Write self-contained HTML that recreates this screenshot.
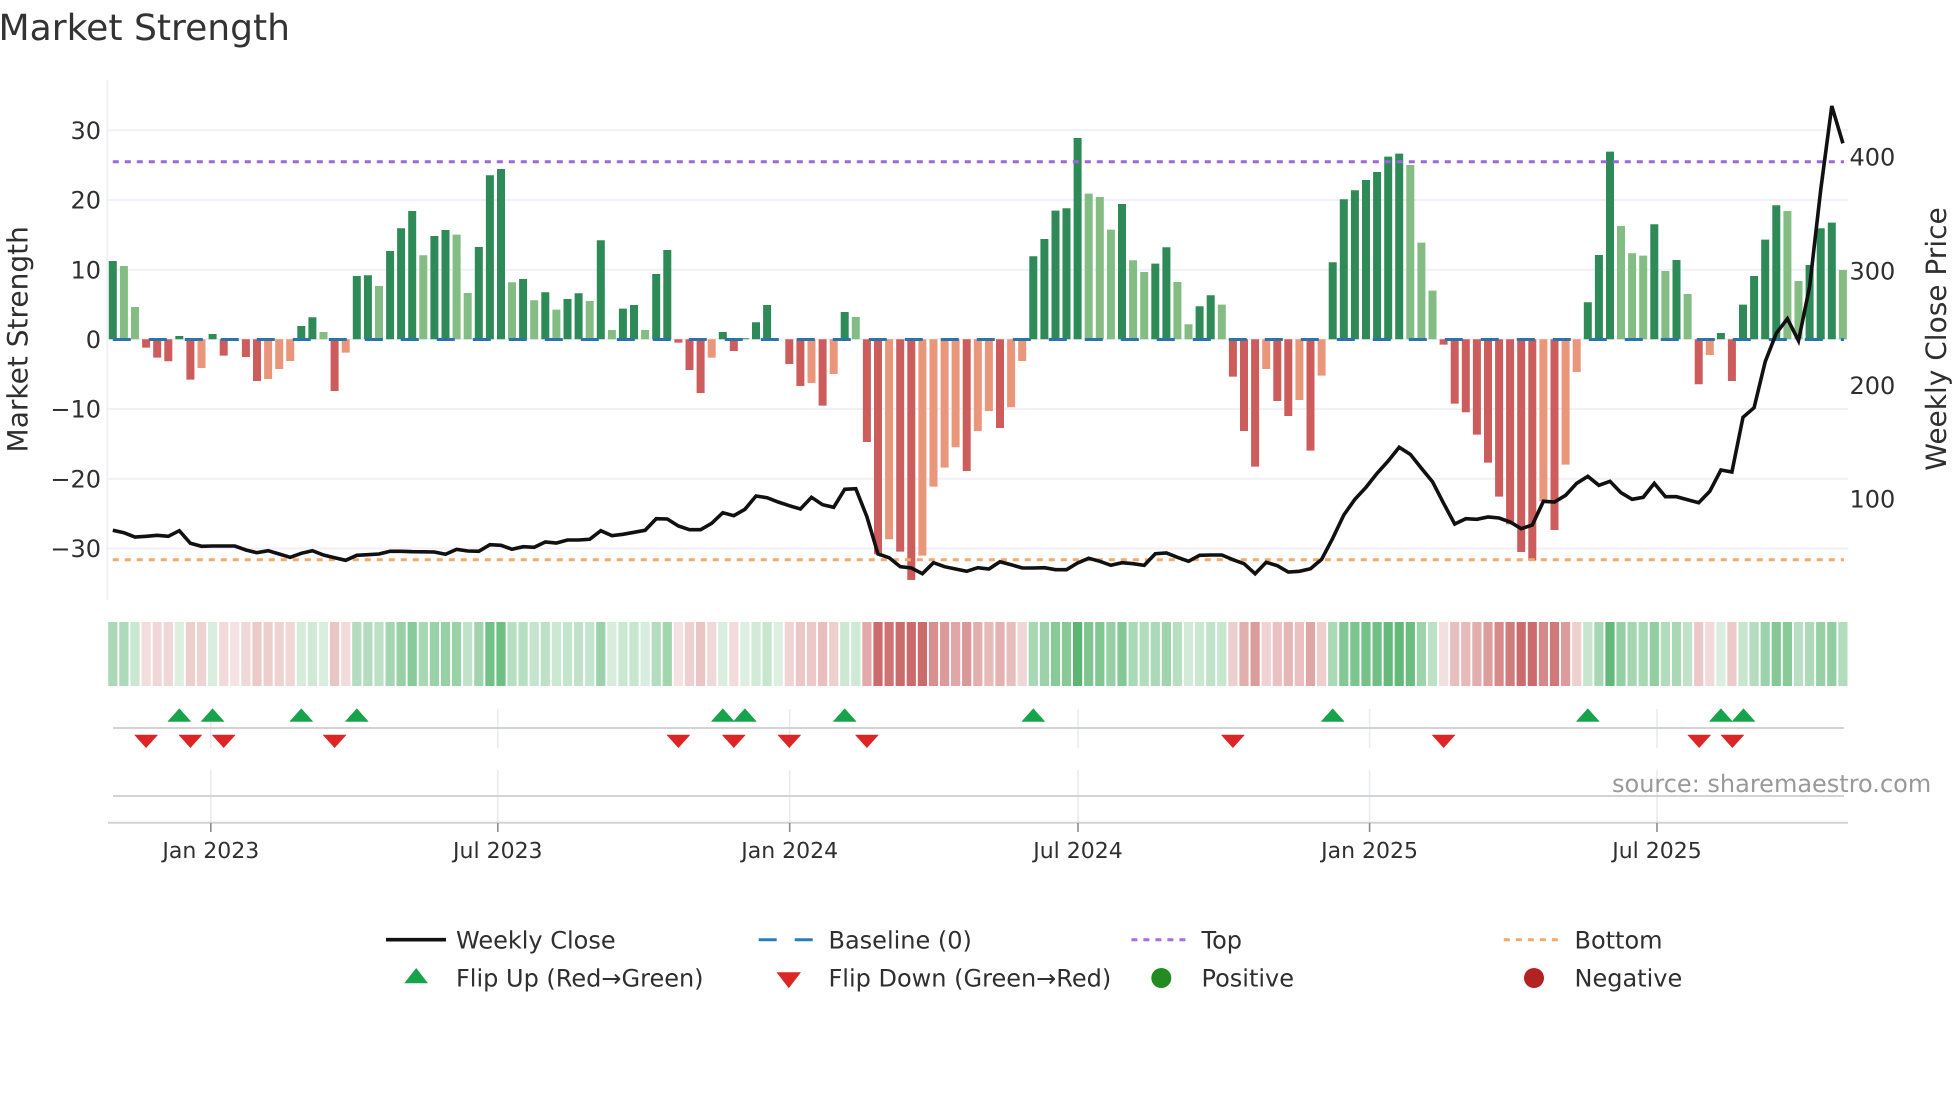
<!DOCTYPE html>
<html lang="en"><head><meta charset="utf-8"><title>Market Strength</title>
<style>
html,body{margin:0;padding:0;background:#fff;width:1960px;height:1102px;overflow:hidden}
svg{display:block}
text{font-family:"DejaVu Sans","Liberation Sans",sans-serif;fill:#2f2f2f;text-rendering:geometricPrecision}
.yt{font-size:24px;text-anchor:end}
.rt{font-size:24px}
.xt{font-size:22px;text-anchor:middle}
.lg{font-size:24px}
</style></head><body>
<svg width="1960" height="1102" viewBox="0 0 1960 1102" xmlns="http://www.w3.org/2000/svg">
<defs>
<path id="u" d="M-11.3 721.4H11.3L0 708.8Z" fill="#16a34a" stroke="#16a34a" stroke-width=".6" stroke-linejoin="round"/>
<path id="d" d="M-11.3 735H11.3L0 747.6Z" fill="#dc2626" stroke="#dc2626" stroke-width=".6" stroke-linejoin="round"/>
</defs>
<rect width="1960" height="1102" fill="#fff"/>
<text x="-1.5" y="40" font-size="36.1" style="fill:#333">Market Strength</text>
<path d="M107.3 80V600M108 130.3H1848M108 200H1848M108 269.7H1848M108 339.3H1848M108 409H1848M108 478.7H1848M108 548.5H1848" stroke="#f0f1f6" stroke-width="2" fill="none"/>
<g fill="none" stroke-width="8">
<path stroke="#2e8b57" d="M112.8 339.3v-78.3M179.3 339.3v-3.3M212.6 339.3v-5.3M301.3 339.3v-13.3M312.4 339.3v-22M356.8 339.3v-63.3M367.9 339.3v-64M390.1 339.3v-88.3M401.1 339.3v-111M412.2 339.3v-128.3M434.4 339.3v-103.3M445.5 339.3v-109.3M478.8 339.3v-92.3M489.9 339.3v-164M501 339.3v-170.3M523.1 339.3v-60.3M545.3 339.3v-47M567.5 339.3v-40.3M578.6 339.3v-46M600.8 339.3v-99M622.9 339.3v-30.7M634 339.3v-34.3M656.2 339.3v-65.3M667.3 339.3v-89.3M722.8 339.3v-7.3M744.9 339.3v-1M756 339.3v-17M767.1 339.3v-34.3M844.7 339.3v-27.3M1033.3 339.3v-83M1044.4 339.3v-100.3M1055.5 339.3v-128.7M1066.5 339.3v-131M1077.6 339.3v-201.3M1122 339.3v-135.3M1155.3 339.3v-75.7M1166.4 339.3v-92M1199.6 339.3v-33M1210.7 339.3v-44M1332.7 339.3v-77M1343.8 339.3v-140M1354.9 339.3v-149M1366 339.3v-159.3M1377.1 339.3v-167.3M1388.2 339.3v-182.7M1399.2 339.3v-185.7M1587.8 339.3v-37M1598.9 339.3v-84.3M1610 339.3v-187.7M1654.3 339.3v-115M1676.5 339.3v-79.3M1720.9 339.3v-6.3M1743 339.3v-34.7M1754.1 339.3v-63.3M1765.2 339.3v-99.7M1776.3 339.3v-134M1809.6 339.3v-74.3M1820.7 339.3v-111M1831.8 339.3v-116.7"/>
<path stroke="#83bd83" d="M123.9 339.3v-73.3M135 339.3v-32.3M323.5 339.3v-7.3M379 339.3v-53.3M423.3 339.3v-84M456.6 339.3v-104.7M467.7 339.3v-46.3M512 339.3v-57M534.2 339.3v-39M556.4 339.3v-29.7M589.7 339.3v-38.3M611.9 339.3v-9.3M645.1 339.3v-9.3M855.8 339.3v-22.3M1088.7 339.3v-145.7M1099.8 339.3v-142.3M1110.9 339.3v-109.7M1133.1 339.3v-79M1144.2 339.3v-67.3M1177.4 339.3v-57.3M1188.5 339.3v-15M1221.8 339.3v-34.7M1410.3 339.3v-174.3M1421.4 339.3v-96.7M1432.5 339.3v-48.7M1621 339.3v-113.3M1632.1 339.3v-86M1643.2 339.3v-83.7M1665.4 339.3v-68.3M1687.6 339.3v-45.3M1787.4 339.3v-128.3M1798.5 339.3v-58.3M1842.9 339.3v-69.3"/>
<path stroke="#cd5c5c" d="M146.1 339.3v8.3M157.2 339.3v18.3M168.3 339.3v22M190.4 339.3v40.3M223.7 339.3v16.3M245.9 339.3v17.7M257 339.3v41.7M334.6 339.3v51.7M678.4 339.3v3.3M689.5 339.3v30.7M700.6 339.3v53.7M733.8 339.3v11.7M789.3 339.3v24.7M800.4 339.3v46.7M822.6 339.3v66.3M866.9 339.3v102.7M878 339.3v215M900.2 339.3v212.3M911.3 339.3v240.7M966.7 339.3v131.7M1000 339.3v88.7M1232.9 339.3v37.3M1244 339.3v91.7M1255.1 339.3v127.3M1277.3 339.3v61.7M1288.3 339.3v76.7M1310.5 339.3v111.3M1443.6 339.3v5.3M1454.7 339.3v64.3M1465.8 339.3v73M1476.9 339.3v95.3M1488 339.3v123.3M1499.1 339.3v157.3M1510.1 339.3v185M1521.2 339.3v212.7M1532.3 339.3v221.3M1554.5 339.3v190.7M1698.7 339.3v45M1731.9 339.3v41.7"/>
<path stroke="#e9967a" d="M201.5 339.3v28.7M268.1 339.3v39.7M279.2 339.3v29.7M290.2 339.3v21.7M345.7 339.3v13.3M711.7 339.3v18.3M811.5 339.3v43.7M833.7 339.3v34.7M889.1 339.3v200M922.4 339.3v216.3M933.5 339.3v147.3M944.6 339.3v128.3M955.6 339.3v108M977.8 339.3v91.7M988.9 339.3v71.7M1011.1 339.3v68M1022.2 339.3v21.7M1266.2 339.3v29.7M1299.4 339.3v60.7M1321.6 339.3v36.3M1543.4 339.3v162M1565.6 339.3v125.3M1576.7 339.3v32.7M1709.8 339.3v15.7"/>
</g>
<path d="M112.8 339.5H1844" stroke="#2b74a8" stroke-width="3" stroke-dasharray="18 18" fill="none"/>
<path d="M112.8 161.7H1844" stroke="#9c68d8" stroke-width="3" stroke-dasharray="6 6" fill="none"/>
<path d="M112.8 559.7H1844" stroke="#f2a96c" stroke-width="3" stroke-dasharray="6 6" fill="none"/>
<polyline fill="none" stroke="#111" stroke-width="3.6" stroke-linejoin="miter" points="112.8,530.3 123.9,532.7 135,537 146.1,536.3 157.2,535.3 168.3,536.3 179.3,530.7 190.4,543.3 201.5,546.3 212.6,546 223.7,546 234.8,546 245.9,550 257,552.7 268.1,550.7 279.2,554 290.2,557.3 301.3,553.3 312.4,550.7 323.5,555 334.6,557.7 345.7,560.3 356.8,555.3 367.9,554.7 379,554 390.1,551.3 401.1,551.3 412.2,551.7 423.3,551.8 434.4,552 445.5,554.3 456.6,549.3 467.7,551 478.8,551.3 489.9,544.7 501,545.3 512,549.3 523.1,546.7 534.2,547.3 545.3,542 556.4,543 567.5,540 578.6,540 589.7,539.3 600.8,530.7 611.9,535.7 622.9,534.3 634,532.3 645.1,530.3 656.2,518.7 667.3,519 678.4,526 689.5,529.7 700.6,529.7 711.7,523.3 722.8,512.7 733.8,515.7 744.9,509.3 756,496 767.1,497.7 778.2,502 789.3,505.7 800.4,509 811.5,497.3 822.6,504.7 833.7,507.3 844.7,489.3 855.8,488.7 866.9,516.7 878,554 889.1,557.7 900.2,566.7 911.3,568 922.4,573.7 933.5,562.7 944.6,566.7 955.6,569 966.7,571.3 977.8,567.7 988.9,569 1000,561.7 1011.1,564.7 1022.2,568 1033.3,568 1044.4,567.7 1055.5,569.7 1066.5,569.7 1077.6,563 1088.7,558.3 1099.8,561.3 1110.9,565.3 1122,562.7 1133.1,563.7 1144.2,565.3 1155.3,553.7 1166.4,553 1177.4,557.3 1188.5,561.3 1199.6,555.3 1210.7,555 1221.8,555 1232.9,559.7 1244,563.7 1255.1,573.7 1266.2,562.3 1277.3,565.7 1288.3,572 1299.4,571.3 1310.5,568.7 1321.6,559.3 1332.7,538.3 1343.8,515 1354.9,499.3 1366,487.3 1377.1,473.3 1388.2,461 1399.2,447.3 1410.3,454.3 1421.4,468.3 1432.5,481.7 1443.6,503.3 1454.7,524 1465.8,518.7 1476.9,519.3 1488,517 1499.1,518 1510.1,522 1521.2,528.7 1532.3,525 1543.4,501.3 1554.5,502 1565.6,495.3 1576.7,483.3 1587.8,476.3 1598.9,485.3 1610,481.3 1621,492.7 1632.1,499.3 1643.2,497.3 1654.3,483.3 1665.4,496.7 1676.5,496.7 1687.6,499.7 1698.7,502.7 1709.8,491.3 1720.9,470 1731.9,472 1743,417.3 1754.1,407.7 1765.2,361.7 1776.3,333.3 1787.4,318.7 1798.5,340.7 1809.6,286.7 1820.7,190 1831.8,106 1842.9,143.3"/>
<text class="yt" x="101" y="139">30</text>
<text class="yt" x="101" y="208.7">20</text>
<text class="yt" x="101" y="278.4">10</text>
<text class="yt" x="101" y="348">0</text>
<text class="yt" x="101" y="417.7">−10</text>
<text class="yt" x="101" y="487.4">−20</text>
<text class="yt" x="101" y="557.2">−30</text>
<text class="rt" x="1849.5" y="165.6">400</text>
<text class="rt" x="1849.5" y="279.6">300</text>
<text class="rt" x="1849.5" y="393.9">200</text>
<text class="rt" x="1849.5" y="507.6">100</text>
<text transform="translate(27.4 339.3) rotate(-90)" text-anchor="middle" font-size="28">Market Strength</text>
<text transform="translate(1946 339) rotate(-90)" text-anchor="middle" font-size="28">Weekly Close Price</text>
<g fill="none" stroke="rgb(33,156,64)" stroke-width="9.2" opacity=".95">
<path opacity=".40" d="M112.8 622v64"/><path opacity=".39" d="M123.9 622v64"/><path opacity=".26" d="M135 622v64"/><path opacity=".17" d="M179.3 622v64"/><path opacity=".18" d="M212.6 622v64"/><path opacity=".20" d="M301.3 622v64"/><path opacity=".23" d="M312.4 622v64"/><path opacity=".18" d="M323.5 622v64"/><path opacity=".36" d="M356.8 622v64"/><path opacity=".36" d="M367.9 622v64"/><path opacity=".32" d="M379 622v64"/><path opacity=".43" d="M390.1 622v64"/><path opacity=".50" d="M401.1 622v64"/><path opacity=".56" d="M412.2 622v64"/><path opacity=".42" d="M423.3 622v64"/><path opacity=".48" d="M434.4 622v64"/><path opacity=".50" d="M445.5 622v64"/><path opacity=".48" d="M456.6 622v64"/><path opacity=".30" d="M467.7 622v64"/><path opacity=".45" d="M478.8 622v64"/><path opacity=".67" d="M489.9 622v64"/><path opacity=".69" d="M501 622v64"/><path opacity=".34" d="M512 622v64"/><path opacity=".35" d="M523.1 622v64"/><path opacity=".28" d="M534.2 622v64"/><path opacity=".31" d="M545.3 622v64"/><path opacity=".25" d="M556.4 622v64"/><path opacity=".28" d="M567.5 622v64"/><path opacity=".30" d="M578.6 622v64"/><path opacity=".28" d="M589.7 622v64"/><path opacity=".47" d="M600.8 622v64"/><path opacity=".19" d="M611.9 622v64"/><path opacity=".26" d="M622.9 622v64"/><path opacity=".27" d="M634 622v64"/><path opacity=".19" d="M645.1 622v64"/><path opacity=".36" d="M656.2 622v64"/><path opacity=".44" d="M667.3 622v64"/><path opacity=".18" d="M722.8 622v64"/><path opacity=".16" d="M744.9 622v64"/><path opacity=".21" d="M756 622v64"/><path opacity=".27" d="M767.1 622v64"/><path opacity=".16" d="M778.2 622v64"/><path opacity=".24" d="M844.7 622v64"/><path opacity=".23" d="M855.8 622v64"/><path opacity=".42" d="M1033.3 622v64"/><path opacity=".47" d="M1044.4 622v64"/><path opacity=".56" d="M1055.5 622v64"/><path opacity=".57" d="M1066.5 622v64"/><path opacity=".78" d="M1077.6 622v64"/><path opacity=".61" d="M1088.7 622v64"/><path opacity=".60" d="M1099.8 622v64"/><path opacity=".50" d="M1110.9 622v64"/><path opacity=".58" d="M1122 622v64"/><path opacity=".40" d="M1133.1 622v64"/><path opacity=".37" d="M1144.2 622v64"/><path opacity=".40" d="M1155.3 622v64"/><path opacity=".45" d="M1166.4 622v64"/><path opacity=".34" d="M1177.4 622v64"/><path opacity=".21" d="M1188.5 622v64"/><path opacity=".26" d="M1199.6 622v64"/><path opacity=".30" d="M1210.7 622v64"/><path opacity=".27" d="M1221.8 622v64"/><path opacity=".40" d="M1332.7 622v64"/><path opacity=".59" d="M1343.8 622v64"/><path opacity=".62" d="M1354.9 622v64"/><path opacity=".65" d="M1366 622v64"/><path opacity=".68" d="M1377.1 622v64"/><path opacity=".73" d="M1388.2 622v64"/><path opacity=".74" d="M1399.2 622v64"/><path opacity=".70" d="M1410.3 622v64"/><path opacity=".46" d="M1421.4 622v64"/><path opacity=".31" d="M1432.5 622v64"/><path opacity=".27" d="M1587.8 622v64"/><path opacity=".42" d="M1598.9 622v64"/><path opacity=".74" d="M1610 622v64"/><path opacity=".51" d="M1621 622v64"/><path opacity=".43" d="M1632.1 622v64"/><path opacity=".42" d="M1643.2 622v64"/><path opacity=".52" d="M1654.3 622v64"/><path opacity=".37" d="M1665.4 622v64"/><path opacity=".41" d="M1676.5 622v64"/><path opacity=".30" d="M1687.6 622v64"/><path opacity=".18" d="M1720.9 622v64"/><path opacity=".27" d="M1743 622v64"/><path opacity=".36" d="M1754.1 622v64"/><path opacity=".47" d="M1765.2 622v64"/><path opacity=".58" d="M1776.3 622v64"/><path opacity=".56" d="M1787.4 622v64"/><path opacity=".34" d="M1798.5 622v64"/><path opacity=".39" d="M1809.6 622v64"/><path opacity=".50" d="M1820.7 622v64"/><path opacity=".52" d="M1831.8 622v64"/><path opacity=".37" d="M1842.9 622v64"/>
</g>
<g fill="none" stroke="rgb(188,60,60)" stroke-width="9.2" opacity=".92">
<path opacity=".19" d="M146.1 622v64"/><path opacity=".22" d="M157.2 622v64"/><path opacity=".23" d="M168.3 622v64"/><path opacity=".28" d="M190.4 622v64"/><path opacity=".25" d="M201.5 622v64"/><path opacity=".21" d="M223.7 622v64"/><path opacity=".16" d="M234.8 622v64"/><path opacity=".22" d="M245.9 622v64"/><path opacity=".29" d="M257 622v64"/><path opacity=".28" d="M268.1 622v64"/><path opacity=".25" d="M279.2 622v64"/><path opacity=".23" d="M290.2 622v64"/><path opacity=".32" d="M334.6 622v64"/><path opacity=".20" d="M345.7 622v64"/><path opacity=".17" d="M678.4 622v64"/><path opacity=".26" d="M689.5 622v64"/><path opacity=".33" d="M700.6 622v64"/><path opacity=".22" d="M711.7 622v64"/><path opacity=".20" d="M733.8 622v64"/><path opacity=".24" d="M789.3 622v64"/><path opacity=".31" d="M800.4 622v64"/><path opacity=".30" d="M811.5 622v64"/><path opacity=".36" d="M822.6 622v64"/><path opacity=".27" d="M833.7 622v64"/><path opacity=".48" d="M866.9 622v64"/><path opacity=".82" d="M878 622v64"/><path opacity=".78" d="M889.1 622v64"/><path opacity=".82" d="M900.2 622v64"/><path opacity=".82" d="M911.3 622v64"/><path opacity=".82" d="M922.4 622v64"/><path opacity=".62" d="M933.5 622v64"/><path opacity=".56" d="M944.6 622v64"/><path opacity=".49" d="M955.6 622v64"/><path opacity=".57" d="M966.7 622v64"/><path opacity=".45" d="M977.8 622v64"/><path opacity=".38" d="M988.9 622v64"/><path opacity=".44" d="M1000 622v64"/><path opacity=".37" d="M1011.1 622v64"/><path opacity=".23" d="M1022.2 622v64"/><path opacity=".27" d="M1232.9 622v64"/><path opacity=".45" d="M1244 622v64"/><path opacity=".55" d="M1255.1 622v64"/><path opacity=".25" d="M1266.2 622v64"/><path opacity=".35" d="M1277.3 622v64"/><path opacity=".40" d="M1288.3 622v64"/><path opacity=".35" d="M1299.4 622v64"/><path opacity=".50" d="M1310.5 622v64"/><path opacity=".27" d="M1321.6 622v64"/><path opacity=".18" d="M1443.6 622v64"/><path opacity=".36" d="M1454.7 622v64"/><path opacity=".39" d="M1465.8 622v64"/><path opacity=".45" d="M1476.9 622v64"/><path opacity=".54" d="M1488 622v64"/><path opacity=".65" d="M1499.1 622v64"/><path opacity=".73" d="M1510.1 622v64"/><path opacity=".82" d="M1521.2 622v64"/><path opacity=".82" d="M1532.3 622v64"/><path opacity=".66" d="M1543.4 622v64"/><path opacity=".75" d="M1554.5 622v64"/><path opacity=".55" d="M1565.6 622v64"/><path opacity=".26" d="M1576.7 622v64"/><path opacity=".30" d="M1698.7 622v64"/><path opacity=".21" d="M1709.8 622v64"/><path opacity=".29" d="M1731.9 622v64"/>
</g>
<path d="M210.8 709V748M497.8 709V748M789.7 709V748M1078 709V748M1369.6 709V748M1657 709V748M210.8 770V822M497.8 770V822M789.7 770V822M1078 770V822M1369.6 770V822M1657 770V822" stroke="#e9ebef" stroke-width="1.6" fill="none"/>
<path d="M113 728H1844M113 796H1844M108 822.7H1848" stroke="#d2d3d7" stroke-width="2" fill="none"/>
<path d="M210.8 823V832M497.8 823V832M789.7 823V832M1078 823V832M1369.6 823V832M1657 823V832" stroke="#8c8c8c" stroke-width="1.6" fill="none"/>
<use href="#u" x="179.3"/><use href="#u" x="212.6"/><use href="#u" x="301.3"/><use href="#u" x="356.8"/><use href="#u" x="722.8"/><use href="#u" x="744.9"/><use href="#u" x="844.7"/><use href="#u" x="1033.3"/><use href="#u" x="1332.7"/><use href="#u" x="1587.8"/><use href="#u" x="1720.9"/><use href="#u" x="1743.5"/>
<use href="#d" x="146.1"/><use href="#d" x="190.4"/><use href="#d" x="223.7"/><use href="#d" x="334.6"/><use href="#d" x="678.4"/><use href="#d" x="733.8"/><use href="#d" x="789.3"/><use href="#d" x="866.9"/><use href="#d" x="1232.9"/><use href="#d" x="1443.6"/><use href="#d" x="1699.2"/><use href="#d" x="1732.4"/>
<text class="xt" x="210.8" y="858">Jan 2023</text>
<text class="xt" x="497.8" y="858">Jul 2023</text>
<text class="xt" x="789.7" y="858">Jan 2024</text>
<text class="xt" x="1078" y="858">Jul 2024</text>
<text class="xt" x="1369.6" y="858">Jan 2025</text>
<text class="xt" x="1657" y="858">Jul 2025</text>
<text x="1612" y="792" font-size="24" style="fill:#999">source: sharemaestro.com</text>
<path d="M386 939.7H446" stroke="#111" stroke-width="3.6" fill="none"/>
<path d="M758.7 939.7H812.7" stroke="#2b7db5" stroke-width="3" stroke-dasharray="18 18" fill="none"/>
<path d="M1131.4 939.7H1186" stroke="#a66fe0" stroke-width="3" stroke-dasharray="6 6" fill="none"/>
<path d="M1503.8 939.7H1558.7" stroke="#f4a96c" stroke-width="3" stroke-dasharray="6 6" fill="none"/>
<path d="M404.3 983.3H428L416.2 968Z" fill="#16a34a"/>
<path d="M776.5 972.3H801L788.8 988.3Z" fill="#dc2626"/>
<circle cx="1161.3" cy="978" r="10" fill="#228b22"/>
<circle cx="1534" cy="978" r="10" fill="#b22222"/>
<text class="lg" x="456" y="948.3">Weekly Close</text>
<text class="lg" x="828.5" y="948.3">Baseline (0)</text>
<text class="lg" x="1201.5" y="948.3">Top</text>
<text class="lg" x="1574.5" y="948.3">Bottom</text>
<text class="lg" x="456" y="986.7">Flip Up (Red→Green)</text>
<text class="lg" x="828.5" y="986.7">Flip Down (Green→Red)</text>
<text class="lg" x="1201.5" y="986.7">Positive</text>
<text class="lg" x="1574.5" y="986.7">Negative</text>
</svg>
</body></html>
